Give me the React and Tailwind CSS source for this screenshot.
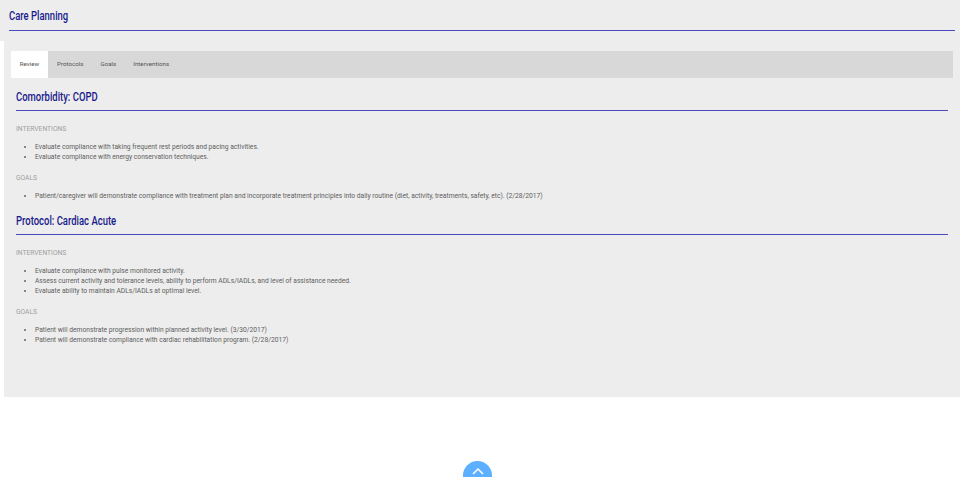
const F = { fontFamily: "Roboto, sans-serif" };

function Section({ title, groups }) {
  return (
    <section>
      <h2 className="h-[21px] text-[12px] leading-[14px] font-medium text-[#1a1a8c] border-b border-[#4a4ac0]">
        <span className="inline-block origin-left scale-x-[0.79] whitespace-nowrap">{title}</span>
      </h2>
      {groups.map((g, i) => (
        <div key={i}>
          <div className={`text-[6.7px] leading-[8px] text-[#a0a0a0] ${i === 0 ? "mt-[14px]" : "mt-[12px]"}`}>{g.label}</div>
          <ul className="mt-[10px] pl-[19px] list-disc text-[6.7px] leading-[9.7px] text-[#606060]">
            {g.items.map((t) => (
              <li key={t}>{t}</li>
            ))}
          </ul>
        </div>
      ))}
    </section>
  );
}

export default function App() {
  return (
    <div style={F} className="h-[477px] w-[960px] bg-white relative overflow-hidden">
      <header className="bg-[#ededed] h-[41px] pl-[9px] pr-[5px] pt-[10px]">
        <h1 className="h-[21px] text-[12px] leading-[13px] font-medium text-[#1a1a8c] border-b border-[#4a4ac0]">
          <span className="inline-block origin-left scale-x-[0.79] whitespace-nowrap">Care Planning</span>
        </h1>
      </header>
      <main className="ml-[4px] h-[356px] bg-[#ededed] pt-[10px] pl-[7px] pr-[7px]">
        <nav className="h-[27px] bg-[#d8d8d8] flex items-stretch text-[6.2px] text-[#555555]">
          <div className="w-[37px] bg-white flex items-center justify-center">Review</div>
          <div className="ml-[9px] flex items-center">Protocols</div>
          <div className="ml-[17px] flex items-center">Goals</div>
          <div className="ml-[17px] flex items-center">Interventions</div>
        </nav>
        <div className="ml-[5px] mr-[5px] mt-[12px] flex flex-col gap-[12px]">
          <Section
            title="Comorbidity: COPD"
            groups={[
              { label: "INTERVENTIONS", items: ["Evaluate compliance with taking frequent rest periods and pacing activities.", "Evaluate compliance with energy conservation techniques."] },
              { label: "GOALS", items: ["Patient/caregiver will demonstrate compliance with treatment plan and incorporate treatment principles into daily routine (diet, activity, treatments, safety, etc). (2/28/2017)"] },
            ]}
          />
          <Section
            title="Protocol: Cardiac Acute"
            groups={[
              { label: "INTERVENTIONS", items: ["Evaluate compliance with pulse monitored activity.", "Assess current activity and tolerance levels, ability to perform ADLs/IADLs, and level of assistance needed.", "Evaluate ability to maintain ADLs/IADLs at optimal level."] },
              { label: "GOALS", items: ["Patient will demonstrate progression within planned activity level. (3/30/2017)", "Patient will demonstrate compliance with cardiac rehabilitation program. (2/28/2017)"] },
            ]}
          />
        </div>
      </main>
      <div className="absolute left-[463px] top-[461px] w-[29px] h-[29px] rounded-full bg-[#5cb0ff] flex justify-center pt-[6px]">
        <svg width="14" height="8" viewBox="0 0 14 8" fill="none" stroke="white" strokeWidth="1.5"><path d="M2 7 L7 2 L12 7" /></svg>
      </div>
    </div>
  );
}
